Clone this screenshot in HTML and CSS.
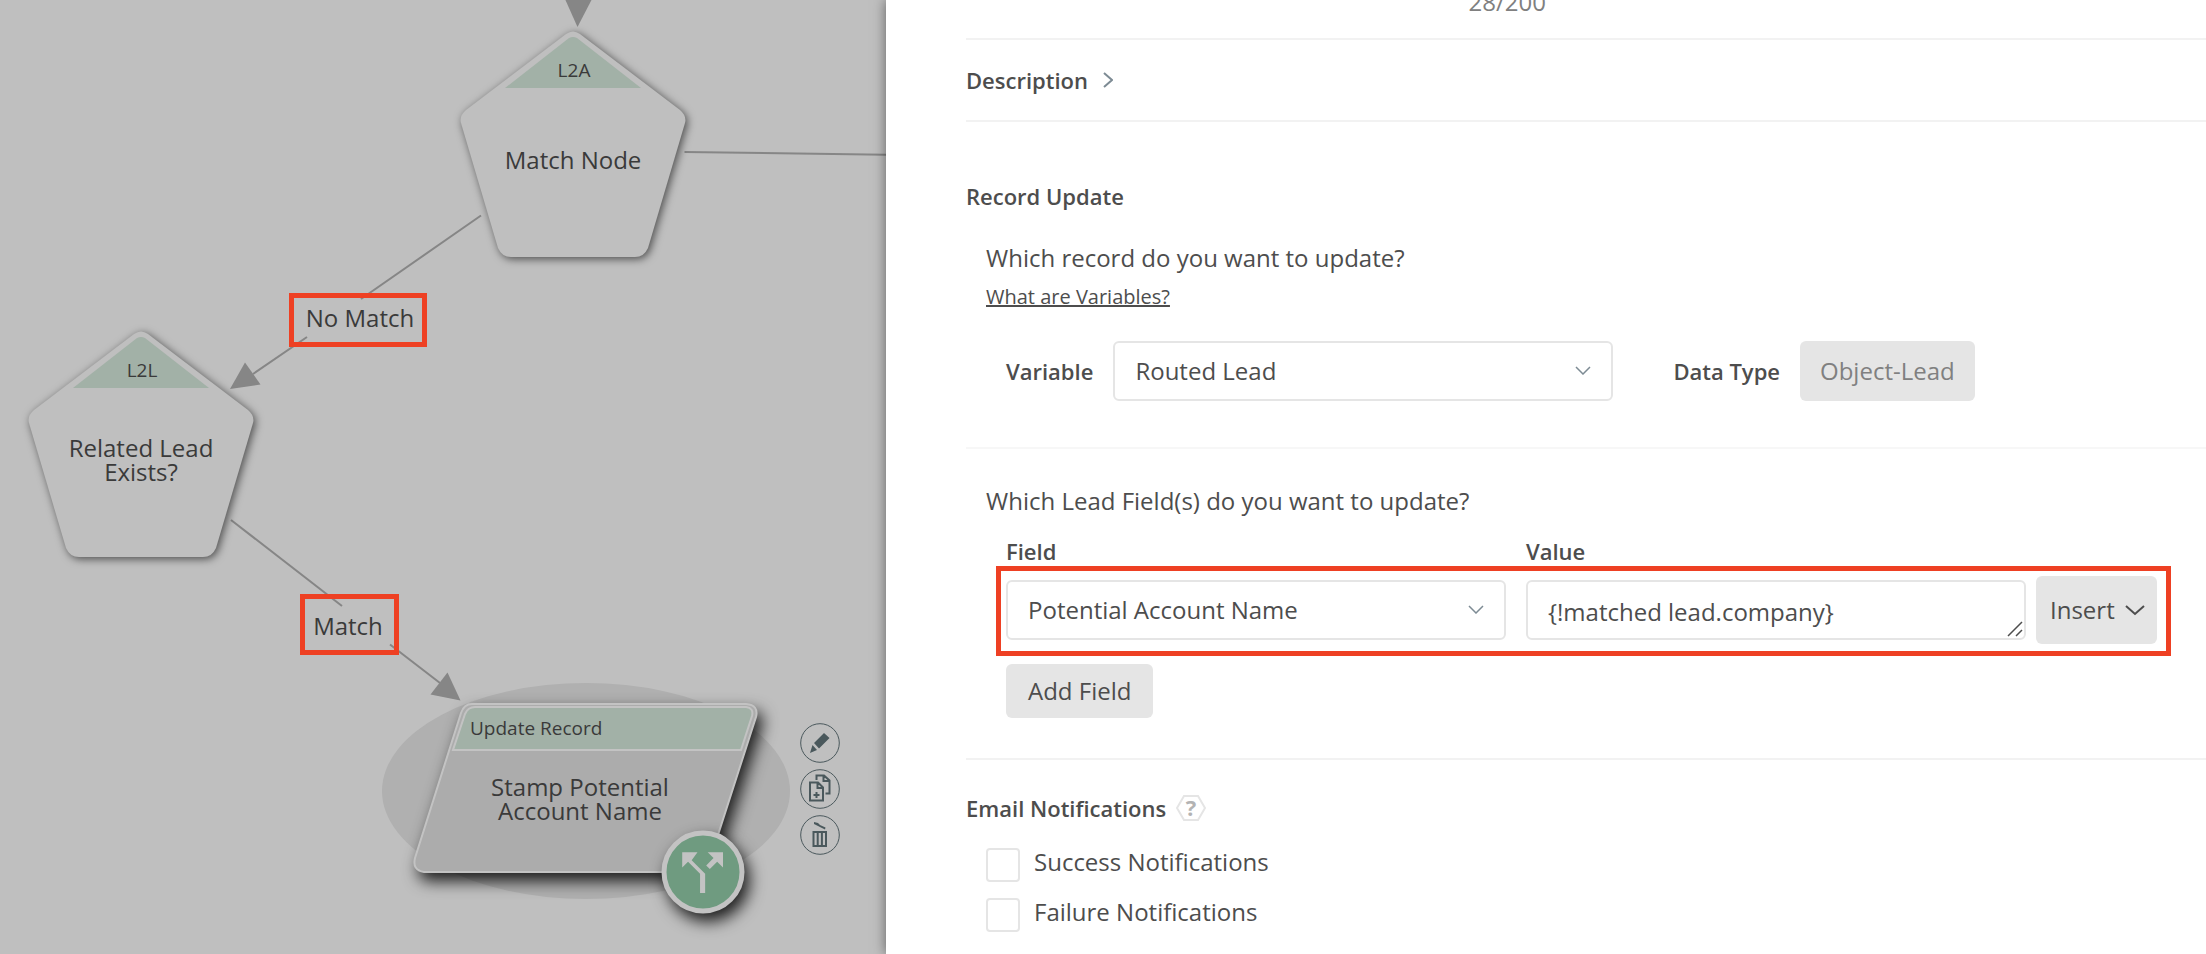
FILE: index.html
```html
<!DOCTYPE html>
<html lang="en">
<head>
    <meta charset="UTF-8">
    <meta name="viewport" content="width=device-width, initial-scale=1.0">
    <title>Update Record</title>
    <link rel="stylesheet" href="styles.css">
</head>
<body>
    <div class="layout">
        <main class="canvas">
            <svg class="graph" aria-label="Routing graph">
                <defs>
                    <path id="pentagon" d="M-7,2 Q0,-3 7,2 L107,78 Q114,84 112,91 L75,216 Q71,225 62,225 L-62,225 Q-71,225 -75,216 L-112,91 Q-114,84 -107,78 Z"/>
                    <path id="pentagonTop" d="M-4,6 Q0,4 4,6 L68,56 L-68,56 Z"/>
                </defs>

                <!-- edges -->
                <g class="edge">
                    <path d="M684.5,152 L900,155"/>
                    <path d="M481,215.5 L361,299 M307,337 L253,374"/>
                    <path d="M231,520 L342,606 M390,644.5 L440,683"/>
                </g>
                <g class="arrow">
                    <path d="M565,-1 L592,-1 L577.5,27 Z"/>
                    <path d="M230,389 L245,362.5 L260.5,384.5 Z"/>
                    <path d="M460.5,700.5 L447.5,672.5 L430.5,694.5 Z"/>
                </g>

                <!-- match nodes -->
                <g transform="translate(573 32)">
                    <use href="#pentagon" class="node"/>
                    <use href="#pentagonTop" class="node-top"/>
                    <text class="type" x="1" y="45">L2A</text>
                    <text class="name" x="0" y="137">Match Node</text>
                </g>
                <g transform="translate(141 332)">
                    <use href="#pentagon" class="node"/>
                    <use href="#pentagonTop" class="node-top"/>
                    <text class="type" x="1" y="45">L2L</text>
                    <text class="name" x="0" y="125">Related Lead</text>
                    <text class="name" x="0" y="149">Exists?</text>
                </g>

                <!-- selected action node -->
                <ellipse class="halo" cx="586" cy="791" rx="204" ry="108"/>
                <path class="action" d="M472,704 L746,704 Q759,705 756,717 L709,863 Q706,872 696,872 L424,872 Q412,870 415,858 L461,713 Q464,704 472,704 Z"/>
                <path class="action-top" d="M475,707 L746,707 Q754,708 752,716 L741,750 L453,750 L465,714 Q468,707 475,707 Z"/>
                <text class="type type-left" x="470" y="735">Update Record</text>
                <text class="name" x="580" y="796">Stamp Potential</text>
                <text class="name" x="580" y="820">Account Name</text>
                <circle class="badge" cx="703" cy="872" r="39"/>
                <path class="badge-icon" transform="translate(672 842) scale(2.55)" d="M14 4l2.29 2.29-2.88 2.88 1.42 1.42 2.88-2.88L20 10V4zm-4 0H4v6l2.29-2.29 4.71 4.7V20h2v-7.59l-5.29-5.3z"/>

                <!-- edge labels -->
                <text class="name" x="360" y="327">No Match</text>
                <rect class="highlight" x="291.5" y="295.5" width="133" height="49"/>
                <text class="name" x="348" y="635">Match</text>
                <rect class="highlight" x="302.5" y="596.5" width="94" height="56"/>
            </svg>

            <div class="node-tools">
                <button type="button" aria-label="Edit">
                    <svg viewBox="0 0 40 40"><circle cx="20" cy="20" r="19.3"/><path class="solid" d="M24,10 L29.5,15 L19,25.5 L14,20 Z M12.5,22 L17,27 L10,30 Z"/></svg>
                </button>
                <button type="button" aria-label="Clone">
                    <svg viewBox="0 0 40 40"><circle cx="20" cy="20" r="19.3"/><path class="thick" d="M10,13.5 H18 L23,18.5 V31.5 H10 Z M17.5,13.5 V19 H23 M16.5,11 V6.5 H24 L29.5,11.5 V24.5 H25.5 M23.5,6.5 V12 H29.5 M16.5,23 V29 M13.5,26 H19.5"/></svg>
                </button>
                <button type="button" aria-label="Delete">
                    <svg viewBox="0 0 40 40"><circle cx="20" cy="20" r="19.3"/><path class="thick" d="M13.5,17 H26 V31 H13.5 Z M17.7,17 V31 M21.9,17 V31"/><path class="solid" d="M14,7 L18,8 L20,10 L25.5,12.5 L25,14.5 L18,11 L14,9 Z"/></svg>
                </button>
            </div>
        </main>

        <aside class="panel">
            <div class="name-count">28/200</div>

            <section class="description">
                <button type="button" class="toggle">Description
                    <svg class="arrow-right" viewBox="0 0 10 16"><path d="M1,1 L9,8 L1,15"/></svg>
                </button>
            </section>

            <section class="record">
                <h2>Record Update</h2>
                <div class="indent">
                    <p class="question">Which record do you want to update?</p>
                    <a class="help-link" href="#">What are Variables?</a>
                    <div class="variable-row">
                        <label for="variable">Variable</label>
                        <div class="select">
                            <select id="variable"><option>Routed Lead</option></select>
                            <svg class="chevron" viewBox="0 0 16 9"><path d="M1,1 L8,8 L15,1"/></svg>
                        </div>
                        <span class="data-label">Data Type</span>
                        <span class="data-type">Object-Lead</span>
                    </div>
                </div>
            </section>

            <section class="fields">
                <p class="question">Which Lead Field(s) do you want to update?</p>
                <div class="field-labels">
                    <label for="field">Field</label>
                    <label for="value">Value</label>
                </div>
                <div class="field-row">
                    <div class="select">
                        <select id="field"><option>Potential Account Name</option></select>
                        <svg class="chevron" viewBox="0 0 16 9"><path d="M1,1 L8,8 L15,1"/></svg>
                    </div>
                    <div class="value">
                        <textarea id="value" rows="1">{!matched lead.company}</textarea>
                        <svg class="grip" viewBox="0 0 16 16"><path d="M1,15 L15,1 M9,15 L15,9"/></svg>
                    </div>
                    <button type="button" class="btn insert">Insert
                        <svg viewBox="0 0 20 11"><path d="M1,1 L10,9 L19,1"/></svg>
                    </button>
                </div>
                <button type="button" class="btn add">Add Field</button>
            </section>

            <section class="notifications">
                <h2>Email Notifications
                    <svg class="hint" viewBox="0 0 30 26"><path d="M8,1 H22 L29,13 L22,25 H8 L1,13 Z"/><text x="15" y="21">?</text></svg>
                </h2>
                <label class="check"><input type="checkbox"> Success Notifications</label>
                <label class="check"><input type="checkbox"> Failure Notifications</label>
            </section>
        </aside>
    </div>
</body>
</html>
```
FILE: styles.css
```css
* { box-sizing: border-box; }
body { margin: 0; font-family: "Open Sans", "Noto Sans", sans-serif; font-size: 24px; line-height: 32px; color: #4d4d4d; background: #fff; }
button, select, textarea { font: inherit; color: inherit; margin: 0; }
h2, p { margin: 0; }
h2, label, .data-label, .toggle { font-size: 22px; line-height: 30px; font-weight: 600; }

.layout { display: grid; grid-template-columns: 443fr 660fr; min-height: 100vh; overflow: hidden; }

/* graph */
.canvas { position: relative; background: #bfbfbf; overflow: hidden; }
.graph { position: absolute; inset: 0; width: 100%; height: 100%; }
.graph text { fill: #3a3a3a; text-anchor: middle; }
.graph .name { font-size: 24px; }
.graph .type { font-size: 19px; }
.graph .type-left { text-anchor: start; }
.edge { fill: none; stroke: #868686; stroke-width: 2; }
.arrow { fill: #868686; }
.node { fill: #bfbfbf; filter: drop-shadow(2px 2px 4px rgba(0,0,0,0.6)); }
.node-top { fill: #a2b1a7; }
.halo { fill: #b0b0b0; }
.action { fill: #acacac; stroke: #c3c3c3; stroke-width: 2; filter: drop-shadow(5px 8px 8px rgba(0,0,0,0.85)); }
.action-top { fill: #a2b1a7; stroke: #c3c3c3; stroke-width: 2; }
.badge { fill: #6f9b80; stroke: #c3c3c3; stroke-width: 5; filter: drop-shadow(5px 8px 8px rgba(0,0,0,0.85)); }
.badge-icon { fill: #c3c3c3; }
.highlight { fill: none; stroke: #ee4023; stroke-width: 5; }

.node-tools { position: absolute; left: 800px; top: 723px; display: flex; flex-direction: column; gap: 6px; }
.node-tools button { width: 40px; height: 40px; padding: 0; border: none; background: none; cursor: pointer; }
.node-tools svg { display: block; fill: none; stroke: #4a585c; stroke-width: 1; }
.node-tools .solid { fill: #4a585c; stroke: none; }
.node-tools .thick { stroke-width: 2; }

/* side panel */
.panel { position: relative; min-width: 0; padding-left: 80px; background: #fff; box-shadow: 0 0 12px rgba(0,0,0,0.5); }
.panel svg { fill: none; stroke: #7d8b94; stroke-width: 2; flex: none; }
.name-count { margin-top: -14px; padding: 0 calc(100% - 580px) 20px 0; text-align: right; color: #808080; border-bottom: 2px solid #f2f2f2; }
.description { padding: 25px 0; border-bottom: 2px solid #f2f2f2; }
.toggle { display: flex; align-items: center; gap: 15px; padding: 0; border: none; background: none; }
.arrow-right { width: 10px; height: 16px; }

.record { padding: 59px 0 46px; border-bottom: 2px solid #f7f7f7; }
.indent { padding: 31px 0 0 20px; }
.help-link { display: block; width: max-content; margin-top: 9px; font-size: 20px; line-height: 28px; color: inherit; }
.variable-row { display: flex; align-items: center; gap: 20px; margin: 30px 0 0 20px; }
.data-label { margin-left: 40px; }
.data-type { padding: 14px 20px; border-radius: 6px; background: #e5e5e5; color: #808080; }

.select, .value { position: relative; flex: 0 1 500px; height: 60px; }
.select select, .value textarea { display: block; width: 100%; height: 60px; padding: 0 20px; border: 2px solid #e5e5e5; border-radius: 6px; background: #fff; appearance: none; outline: none; }
.value textarea { padding: 14px 20px; resize: none; overflow: hidden; }
.panel .chevron { position: absolute; right: 22px; top: 25px; width: 16px; height: 9px; stroke-width: 1.5; pointer-events: none; }
.panel .grip { position: absolute; right: 3px; bottom: 3px; width: 16px; height: 16px; stroke: #4d4d4d; stroke-width: 1.5; pointer-events: none; }

.fields { padding: 36px 0 40px 40px; border-bottom: 2px solid #f2f2f2; }
.fields .question { margin-left: -20px; }
.field-labels { display: flex; gap: 20px; margin: 19px 0 10px; }
.field-labels label { flex: 0 1 500px; }
/* two 500px inputs, the Insert button and the gaps between them */
.field-row { position: relative; display: flex; align-items: center; gap: 20px; width: 1151px; max-width: 100%; }
.field-row::after { content: ""; position: absolute; inset: -10px -14px -12px -10px; border: 5px solid #ee4023; pointer-events: none; }
.btn { border: none; border-radius: 6px; background: #e5e5e5; }
.insert { flex: none; display: flex; align-items: center; gap: 10px; height: 68px; margin-left: -10px; padding: 0 12px 0 14px; }
.panel .insert svg { width: 20px; height: 11px; stroke: #4d4d4d; }
.add { margin-top: 20px; padding: 11px 22px; display: block; }

.notifications { padding-top: 33px; }
.notifications h2 { display: flex; align-items: center; gap: 10px; margin-bottom: 25px; }
.panel .hint { width: 30px; height: 26px; stroke: #e5e5e5; }
.panel .hint text { fill: #b3b3b3; stroke: none; font-size: 22px; font-weight: 700; text-anchor: middle; }
.check { display: flex; gap: 14px; margin: 0 0 16px 20px; font-size: 24px; line-height: 28px; font-weight: 400; }
.check input { appearance: none; width: 34px; height: 34px; margin: 0; border: 2px solid #e5e5e5; border-radius: 4px; background: #fff; }
```
